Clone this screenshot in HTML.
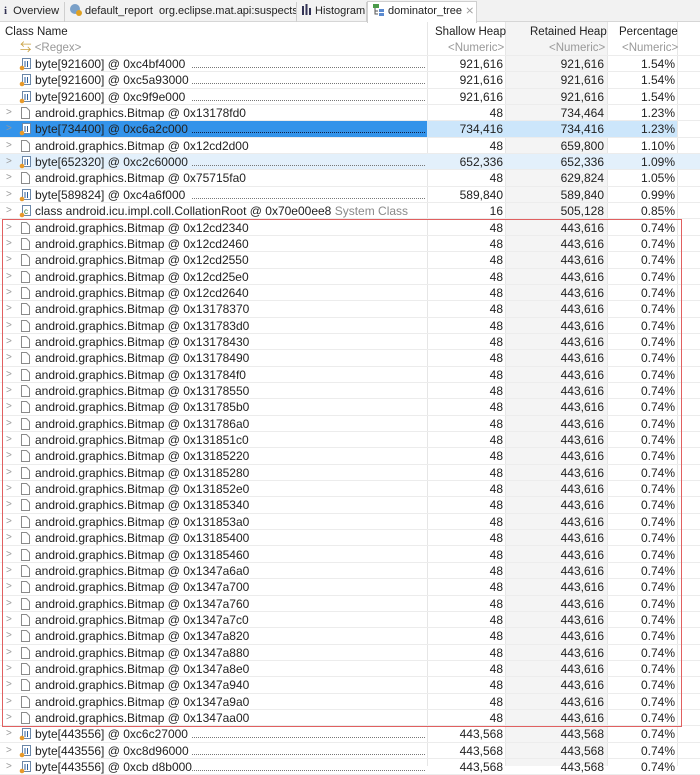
<!DOCTYPE html>
<html><head><meta charset="utf-8"><style>
*{margin:0;padding:0;box-sizing:border-box}
body{width:700px;height:766px;overflow:hidden;background:#fff;font-family:"Liberation Sans","Noto Sans CJK SC",sans-serif;font-size:12px;color:#222;position:relative}
.tabs{position:absolute;left:0;top:0;width:700px;height:22px;background:#f2f2f2;border-bottom:1px solid #d6d6d6;font-size:11px}
.tab{position:absolute;top:2px;height:20px;line-height:19px;border-right:1px solid #cfcfcf;padding-left:4px;white-space:nowrap;overflow:hidden;color:#222}
.tab.act{background:#fff;border:1px solid #cfcfcf;border-bottom:none;top:1px;height:22px}
.colbg{position:absolute;left:505px;top:22px;width:102px;height:744px;background:#f4f4f4}
.vl{position:absolute;top:22px;height:744px;width:1px;background:#e6e6e6}
.hdr{position:absolute;top:23px;height:18px;line-height:18px;font-size:11.5px}
.rgx{position:absolute;top:40px;height:16px;line-height:16px;color:#999;font-size:11.5px}
.r{position:absolute;left:0;width:700px;height:16.35px;top:calc(56px + var(--i)*16.35px);border-bottom:1px solid #ececec;line-height:16px;white-space:nowrap}
.r span{position:absolute;top:0}
.ar{left:6px;color:#999;font-size:10px}
.n{left:35px}
.s{right:197px;text-align:right}
.t{right:96px}
.p{right:25px}
.dots{position:absolute;top:11px;height:1px;border-top:1px dotted #777;right:275px;left:192px}
.sel .bl{position:absolute;left:0;top:0;width:427px;height:16px;background:#3393ea}
.sel .lb{position:absolute;left:427px;top:0;width:250px;height:16px;background:#cce6fb}
.hov{background:#e3f0fb}
.box{position:absolute;left:2px;top:219px;width:680px;height:508px;border:1px solid #e06060}
</style></head><body>
<div class="tabs">
<div class="tab" style="left:0;width:65px"><b style="color:#335;font-family:'Liberation Serif';">i</b>&nbsp; Overview</div>
<div class="tab" style="left:65px;width:232px"><svg width="13" height="13" style="vertical-align:-2px"><ellipse cx="6" cy="6" rx="5" ry="5" fill="#7aa0c8"/><circle cx="10" cy="10" r="3" fill="#e0a020"/></svg> default_report&nbsp; org.eclipse.mat.api:suspects</div>
<div class="tab" style="left:297px;width:70px"><svg width="11" height="11" style="vertical-align:-1px"><rect x="1" y="2" width="2" height="9" fill="#335"/><rect x="4.5" y="0" width="2" height="11" fill="#335"/><rect x="8" y="4" width="2" height="7" fill="#335"/></svg> Histogram</div>
<div class="tab act" style="left:367px;width:110px"><svg width="13" height="13" style="vertical-align:-2px"><rect x="1" y="1" width="6" height="4" fill="#4a9a4a"/><path d="M3 5v6h3M3 8h3" stroke="#555" fill="none"/><rect x="7" y="6" width="5" height="3" fill="#5a8ad0"/><rect x="7" y="10" width="5" height="3" fill="#5a8ad0"/></svg> dominator_tree <span style="color:#999">&#x2A2F;</span></div>
</div>
<div class="colbg"></div>
<div class="vl" style="left:427px"></div><div class="vl" style="left:505px"></div><div class="vl" style="left:607px"></div><div class="vl" style="left:677px"></div>
<div class="hdr" style="left:5px">Class Name</div>
<div class="hdr" style="left:435px">Shallow Heap</div>
<div class="hdr" style="left:530px">Retained Heap</div>
<div class="hdr" style="left:619px">Percentage</div>
<div style="position:absolute;left:0;top:40px;width:700px;height:16px;border-bottom:1px solid #ececec"></div>
<div class="rgx" style="left:20px"><span style="color:#c9a040">&#x21C6;</span> &lt;Regex&gt;</div>
<div class="rgx" style="left:448px">&lt;Numeric&gt;</div>
<div class="rgx" style="left:549px">&lt;Numeric&gt;</div>
<div class="rgx" style="left:622px">&lt;Numeric&gt;</div>

<svg width="0" height="0" style="position:absolute"><defs>
<g id="by"><rect x="3.5" y="0.5" width="8" height="10" fill="#fff" stroke="#6b87a8"/><path d="M6 3v6M8.5 3v6" stroke="#2c5e9a"/><circle cx="3" cy="10" r="2.3" fill="#e89a2a"/></g>
<g id="bm"><path d="M2.5 0.5h5l3 3v8h-8z" fill="#fff" stroke="#8a8a8a"/></g>
<g id="cl"><rect x="3.5" y="0.5" width="8" height="10" fill="#fff" stroke="#6b87a8"/><text x="5" y="9" font-size="8" fill="#2a7a2a" font-family="Liberation Sans">c</text><circle cx="3" cy="10" r="2.3" fill="#e89a2a"/></g>
</defs></svg>

<div class="r" style="--i:0"><svg style="position:absolute;left:19px;top:2px" width="12" height="13"><use href="#by"/></svg><span class="n">byte[921600] @ 0xc4bf4000</span><div class="dots"></div><span class="s">921,616</span><span class="t">921,616</span><span class="p">1.54%</span></div>
<div class="r" style="--i:1"><svg style="position:absolute;left:19px;top:2px" width="12" height="13"><use href="#by"/></svg><span class="n">byte[921600] @ 0xc5a93000</span><div class="dots"></div><span class="s">921,616</span><span class="t">921,616</span><span class="p">1.54%</span></div>
<div class="r" style="--i:2"><svg style="position:absolute;left:19px;top:2px" width="12" height="13"><use href="#by"/></svg><span class="n">byte[921600] @ 0xc9f9e000</span><div class="dots"></div><span class="s">921,616</span><span class="t">921,616</span><span class="p">1.54%</span></div>
<div class="r" style="--i:3"><span class="ar">&gt;</span><svg style="position:absolute;left:19px;top:2px" width="12" height="13"><use href="#bm"/></svg><span class="n">android.graphics.Bitmap @ 0x13178fd0</span><span class="s">48</span><span class="t">734,464</span><span class="p">1.23%</span></div>
<div class="r sel" style="--i:4"><div class="bl"></div><div class="lb"></div><span class="ar">&gt;</span><svg style="position:absolute;left:19px;top:2px" width="12" height="13"><use href="#by"/></svg><span class="n">byte[734400] @ 0xc6a2c000</span><div class="dots" style="border-color:#124"></div><span class="s">734,416</span><span class="t">734,416</span><span class="p">1.23%</span></div>
<div class="r" style="--i:5"><span class="ar">&gt;</span><svg style="position:absolute;left:19px;top:2px" width="12" height="13"><use href="#bm"/></svg><span class="n">android.graphics.Bitmap @ 0x12cd2d00</span><span class="s">48</span><span class="t">659,800</span><span class="p">1.10%</span></div>
<div class="r hov" style="--i:6"><span class="ar">&gt;</span><svg style="position:absolute;left:19px;top:2px" width="12" height="13"><use href="#by"/></svg><span class="n">byte[652320] @ 0xc2c60000</span><div class="dots"></div><span class="s">652,336</span><span class="t">652,336</span><span class="p">1.09%</span></div>
<div class="r" style="--i:7"><span class="ar">&gt;</span><svg style="position:absolute;left:19px;top:2px" width="12" height="13"><use href="#bm"/></svg><span class="n">android.graphics.Bitmap @ 0x75715fa0</span><span class="s">48</span><span class="t">629,824</span><span class="p">1.05%</span></div>
<div class="r" style="--i:8"><span class="ar">&gt;</span><svg style="position:absolute;left:19px;top:2px" width="12" height="13"><use href="#by"/></svg><span class="n">byte[589824] @ 0xc4a6f000</span><div class="dots"></div><span class="s">589,840</span><span class="t">589,840</span><span class="p">0.99%</span></div>
<div class="r" style="--i:9"><span class="ar">&gt;</span><svg style="position:absolute;left:19px;top:2px" width="12" height="13"><use href="#cl"/></svg><span class="n">class android.icu.impl.coll.CollationRoot @ 0x70e00ee8 <span style="position:static;color:#8a8a8a">System Class</span></span><span class="s">16</span><span class="t">505,128</span><span class="p">0.85%</span></div>
<div class="r" style="--i:10"><span class="ar">&gt;</span><svg style="position:absolute;left:19px;top:2px" width="12" height="13"><use href="#bm"/></svg><span class="n">android.graphics.Bitmap @ 0x12cd2340</span><span class="s">48</span><span class="t">443,616</span><span class="p">0.74%</span></div>
<div class="r" style="--i:11"><span class="ar">&gt;</span><svg style="position:absolute;left:19px;top:2px" width="12" height="13"><use href="#bm"/></svg><span class="n">android.graphics.Bitmap @ 0x12cd2460</span><span class="s">48</span><span class="t">443,616</span><span class="p">0.74%</span></div>
<div class="r" style="--i:12"><span class="ar">&gt;</span><svg style="position:absolute;left:19px;top:2px" width="12" height="13"><use href="#bm"/></svg><span class="n">android.graphics.Bitmap @ 0x12cd2550</span><span class="s">48</span><span class="t">443,616</span><span class="p">0.74%</span></div>
<div class="r" style="--i:13"><span class="ar">&gt;</span><svg style="position:absolute;left:19px;top:2px" width="12" height="13"><use href="#bm"/></svg><span class="n">android.graphics.Bitmap @ 0x12cd25e0</span><span class="s">48</span><span class="t">443,616</span><span class="p">0.74%</span></div>
<div class="r" style="--i:14"><span class="ar">&gt;</span><svg style="position:absolute;left:19px;top:2px" width="12" height="13"><use href="#bm"/></svg><span class="n">android.graphics.Bitmap @ 0x12cd2640</span><span class="s">48</span><span class="t">443,616</span><span class="p">0.74%</span></div>
<div class="r" style="--i:15"><span class="ar">&gt;</span><svg style="position:absolute;left:19px;top:2px" width="12" height="13"><use href="#bm"/></svg><span class="n">android.graphics.Bitmap @ 0x13178370</span><span class="s">48</span><span class="t">443,616</span><span class="p">0.74%</span></div>
<div class="r" style="--i:16"><span class="ar">&gt;</span><svg style="position:absolute;left:19px;top:2px" width="12" height="13"><use href="#bm"/></svg><span class="n">android.graphics.Bitmap @ 0x131783d0</span><span class="s">48</span><span class="t">443,616</span><span class="p">0.74%</span></div>
<div class="r" style="--i:17"><span class="ar">&gt;</span><svg style="position:absolute;left:19px;top:2px" width="12" height="13"><use href="#bm"/></svg><span class="n">android.graphics.Bitmap @ 0x13178430</span><span class="s">48</span><span class="t">443,616</span><span class="p">0.74%</span></div>
<div class="r" style="--i:18"><span class="ar">&gt;</span><svg style="position:absolute;left:19px;top:2px" width="12" height="13"><use href="#bm"/></svg><span class="n">android.graphics.Bitmap @ 0x13178490</span><span class="s">48</span><span class="t">443,616</span><span class="p">0.74%</span></div>
<div class="r" style="--i:19"><span class="ar">&gt;</span><svg style="position:absolute;left:19px;top:2px" width="12" height="13"><use href="#bm"/></svg><span class="n">android.graphics.Bitmap @ 0x131784f0</span><span class="s">48</span><span class="t">443,616</span><span class="p">0.74%</span></div>
<div class="r" style="--i:20"><span class="ar">&gt;</span><svg style="position:absolute;left:19px;top:2px" width="12" height="13"><use href="#bm"/></svg><span class="n">android.graphics.Bitmap @ 0x13178550</span><span class="s">48</span><span class="t">443,616</span><span class="p">0.74%</span></div>
<div class="r" style="--i:21"><span class="ar">&gt;</span><svg style="position:absolute;left:19px;top:2px" width="12" height="13"><use href="#bm"/></svg><span class="n">android.graphics.Bitmap @ 0x131785b0</span><span class="s">48</span><span class="t">443,616</span><span class="p">0.74%</span></div>
<div class="r" style="--i:22"><span class="ar">&gt;</span><svg style="position:absolute;left:19px;top:2px" width="12" height="13"><use href="#bm"/></svg><span class="n">android.graphics.Bitmap @ 0x131786a0</span><span class="s">48</span><span class="t">443,616</span><span class="p">0.74%</span></div>
<div class="r" style="--i:23"><span class="ar">&gt;</span><svg style="position:absolute;left:19px;top:2px" width="12" height="13"><use href="#bm"/></svg><span class="n">android.graphics.Bitmap @ 0x131851c0</span><span class="s">48</span><span class="t">443,616</span><span class="p">0.74%</span></div>
<div class="r" style="--i:24"><span class="ar">&gt;</span><svg style="position:absolute;left:19px;top:2px" width="12" height="13"><use href="#bm"/></svg><span class="n">android.graphics.Bitmap @ 0x13185220</span><span class="s">48</span><span class="t">443,616</span><span class="p">0.74%</span></div>
<div class="r" style="--i:25"><span class="ar">&gt;</span><svg style="position:absolute;left:19px;top:2px" width="12" height="13"><use href="#bm"/></svg><span class="n">android.graphics.Bitmap @ 0x13185280</span><span class="s">48</span><span class="t">443,616</span><span class="p">0.74%</span></div>
<div class="r" style="--i:26"><span class="ar">&gt;</span><svg style="position:absolute;left:19px;top:2px" width="12" height="13"><use href="#bm"/></svg><span class="n">android.graphics.Bitmap @ 0x131852e0</span><span class="s">48</span><span class="t">443,616</span><span class="p">0.74%</span></div>
<div class="r" style="--i:27"><span class="ar">&gt;</span><svg style="position:absolute;left:19px;top:2px" width="12" height="13"><use href="#bm"/></svg><span class="n">android.graphics.Bitmap @ 0x13185340</span><span class="s">48</span><span class="t">443,616</span><span class="p">0.74%</span></div>
<div class="r" style="--i:28"><span class="ar">&gt;</span><svg style="position:absolute;left:19px;top:2px" width="12" height="13"><use href="#bm"/></svg><span class="n">android.graphics.Bitmap @ 0x131853a0</span><span class="s">48</span><span class="t">443,616</span><span class="p">0.74%</span></div>
<div class="r" style="--i:29"><span class="ar">&gt;</span><svg style="position:absolute;left:19px;top:2px" width="12" height="13"><use href="#bm"/></svg><span class="n">android.graphics.Bitmap @ 0x13185400</span><span class="s">48</span><span class="t">443,616</span><span class="p">0.74%</span></div>
<div class="r" style="--i:30"><span class="ar">&gt;</span><svg style="position:absolute;left:19px;top:2px" width="12" height="13"><use href="#bm"/></svg><span class="n">android.graphics.Bitmap @ 0x13185460</span><span class="s">48</span><span class="t">443,616</span><span class="p">0.74%</span></div>
<div class="r" style="--i:31"><span class="ar">&gt;</span><svg style="position:absolute;left:19px;top:2px" width="12" height="13"><use href="#bm"/></svg><span class="n">android.graphics.Bitmap @ 0x1347a6a0</span><span class="s">48</span><span class="t">443,616</span><span class="p">0.74%</span></div>
<div class="r" style="--i:32"><span class="ar">&gt;</span><svg style="position:absolute;left:19px;top:2px" width="12" height="13"><use href="#bm"/></svg><span class="n">android.graphics.Bitmap @ 0x1347a700</span><span class="s">48</span><span class="t">443,616</span><span class="p">0.74%</span></div>
<div class="r" style="--i:33"><span class="ar">&gt;</span><svg style="position:absolute;left:19px;top:2px" width="12" height="13"><use href="#bm"/></svg><span class="n">android.graphics.Bitmap @ 0x1347a760</span><span class="s">48</span><span class="t">443,616</span><span class="p">0.74%</span></div>
<div class="r" style="--i:34"><span class="ar">&gt;</span><svg style="position:absolute;left:19px;top:2px" width="12" height="13"><use href="#bm"/></svg><span class="n">android.graphics.Bitmap @ 0x1347a7c0</span><span class="s">48</span><span class="t">443,616</span><span class="p">0.74%</span></div>
<div class="r" style="--i:35"><span class="ar">&gt;</span><svg style="position:absolute;left:19px;top:2px" width="12" height="13"><use href="#bm"/></svg><span class="n">android.graphics.Bitmap @ 0x1347a820</span><span class="s">48</span><span class="t">443,616</span><span class="p">0.74%</span></div>
<div class="r" style="--i:36"><span class="ar">&gt;</span><svg style="position:absolute;left:19px;top:2px" width="12" height="13"><use href="#bm"/></svg><span class="n">android.graphics.Bitmap @ 0x1347a880</span><span class="s">48</span><span class="t">443,616</span><span class="p">0.74%</span></div>
<div class="r" style="--i:37"><span class="ar">&gt;</span><svg style="position:absolute;left:19px;top:2px" width="12" height="13"><use href="#bm"/></svg><span class="n">android.graphics.Bitmap @ 0x1347a8e0</span><span class="s">48</span><span class="t">443,616</span><span class="p">0.74%</span></div>
<div class="r" style="--i:38"><span class="ar">&gt;</span><svg style="position:absolute;left:19px;top:2px" width="12" height="13"><use href="#bm"/></svg><span class="n">android.graphics.Bitmap @ 0x1347a940</span><span class="s">48</span><span class="t">443,616</span><span class="p">0.74%</span></div>
<div class="r" style="--i:39"><span class="ar">&gt;</span><svg style="position:absolute;left:19px;top:2px" width="12" height="13"><use href="#bm"/></svg><span class="n">android.graphics.Bitmap @ 0x1347a9a0</span><span class="s">48</span><span class="t">443,616</span><span class="p">0.74%</span></div>
<div class="r" style="--i:40"><span class="ar">&gt;</span><svg style="position:absolute;left:19px;top:2px" width="12" height="13"><use href="#bm"/></svg><span class="n">android.graphics.Bitmap @ 0x1347aa00</span><span class="s">48</span><span class="t">443,616</span><span class="p">0.74%</span></div>
<div class="r" style="--i:41"><span class="ar">&gt;</span><svg style="position:absolute;left:19px;top:2px" width="12" height="13"><use href="#by"/></svg><span class="n">byte[443556] @ 0xc6c27000</span><div class="dots"></div><span class="s">443,568</span><span class="t">443,568</span><span class="p">0.74%</span></div>
<div class="r" style="--i:42"><span class="ar">&gt;</span><svg style="position:absolute;left:19px;top:2px" width="12" height="13"><use href="#by"/></svg><span class="n">byte[443556] @ 0xc8d96000</span><div class="dots"></div><span class="s">443,568</span><span class="t">443,568</span><span class="p">0.74%</span></div>
<div class="r" style="--i:43"><span class="ar">&gt;</span><svg style="position:absolute;left:19px;top:2px" width="12" height="13"><use href="#by"/></svg><span class="n">byte[443556] @ 0xcb d8b000</span><div class="dots"></div><span class="s">443,568</span><span class="t">443,568</span><span class="p">0.74%</span></div>
<div class="box"></div>
</body></html>
